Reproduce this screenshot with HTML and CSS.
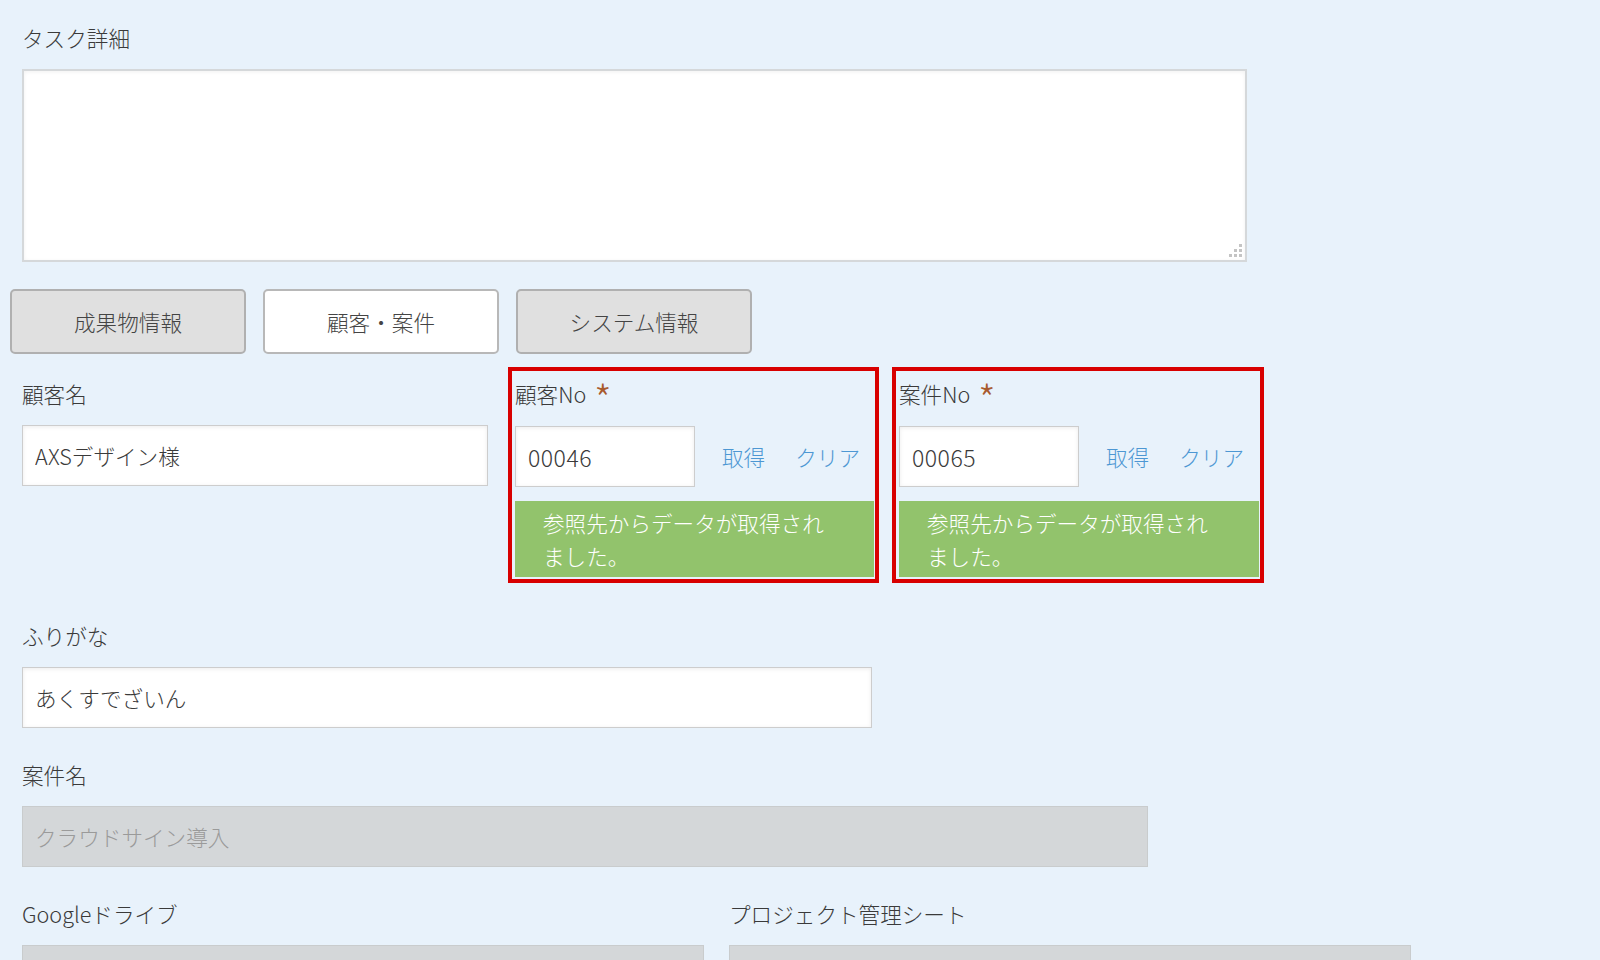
FILE: index.html
```html
<!DOCTYPE html>
<html lang="ja">
<head>
    <meta charset="UTF-8">
    <meta name="viewport" content="width=device-width, initial-scale=1.0">
    <title>タスク編集</title>
    <link rel="stylesheet" href="styles.css">
</head>
<body>
    <div class="form">
        <div class="field detail">
            <label class="field-label">タスク詳細</label>
            <div class="textarea-wrap">
                <textarea class="textarea"></textarea>
                <svg class="grip" width="16" height="14" viewBox="0 0 16 14">
                    <rect x="12" y="0" width="3" height="3"/>
                    <rect x="7" y="5" width="3" height="3"/>
                    <rect x="12" y="5" width="3" height="3"/>
                    <rect x="2" y="10" width="3" height="3"/>
                    <rect x="7" y="10" width="3" height="3"/>
                    <rect x="12" y="10" width="3" height="3"/>
                </svg>
            </div>
        </div>

        <div class="tabs">
            <button class="tab">成果物情報</button>
            <button class="tab active">顧客・案件</button>
            <button class="tab">システム情報</button>
        </div>

        <div class="ref-row">
            <div class="ref-col name-col">
                <label class="field-label">顧客名</label>
                <input class="input" type="text" value="AXSデザイン様">
            </div>

            <div class="ref-col ref-box">
                <label class="field-label">顧客No <span class="required">*</span></label>
                <div class="lookup">
                    <input class="input no-input" type="text" value="00046">
                    <a class="link" href="#">取得</a>
                    <a class="link" href="#">クリア</a>
                </div>
                <div class="notice">参照先からデータが取得されました。</div>
            </div>

            <div class="ref-col ref-box second">
                <label class="field-label">案件No <span class="required">*</span></label>
                <div class="lookup">
                    <input class="input no-input" type="text" value="00065">
                    <a class="link" href="#">取得</a>
                    <a class="link" href="#">クリア</a>
                </div>
                <div class="notice">参照先からデータが取得されました。</div>
            </div>
        </div>

        <div class="field">
            <label class="field-label">ふりがな</label>
            <input class="input w-furigana" type="text" value="あくすでざいん">
        </div>

        <div class="field">
            <label class="field-label">案件名</label>
            <input class="input locked w-project" type="text" value="クラウドサイン導入" disabled>
        </div>

        <div class="split">
            <div class="field half">
                <label class="field-label">Googleドライブ</label>
                <input class="input locked" type="text" disabled>
            </div>
            <div class="field half">
                <label class="field-label">プロジェクト管理シート</label>
                <input class="input locked" type="text" disabled>
            </div>
        </div>
    </div>
</body>
</html>
```

FILE: styles.css
```css
:root {
    --bg-color: #e8f2fb;
    --text-color: #3a3a3a;
    --border-color: #cdcdcd;
    --link-color: #4d97d3;
    --locked-bg: #d4d7d9;
    --notice-bg: #92c36c;
    --mark-red: #d80000;
}

* {
    margin: 0;
    padding: 0;
    box-sizing: border-box;
}

body {
    font-family: "Noto Sans CJK JP", "Noto Sans", sans-serif;
    font-size: 21.6px;
    font-weight: 300;
    background-color: var(--bg-color);
    color: var(--text-color);
    min-height: 100vh;
}

.form {
    padding: 22px 22px 0;
}

.field {
    margin-bottom: 31px;
}

.field-label {
    display: block;
    height: 31px;
    line-height: 31px;
    margin-bottom: 16px;
}

.input {
    display: block;
    width: 100%;
    height: 61px;
    padding: 0 12px;
    border: 1px solid var(--border-color);
    box-shadow: inset 0 1px 4px rgb(0 0 0 / 0.08);
    background-color: #fff;
    font-family: inherit;
    font-size: 21.6px;
    font-weight: 300;
    color: var(--text-color);
    outline: none;
}

.input.locked {
    background-color: var(--locked-bg);
    color: #9a9a9a;
    border-color: #c9cccd;
    box-shadow: none;
}

.no-input {
    width: 180px;
    flex-shrink: 0;
    font-size: 23px;
    letter-spacing: 0.5px;
}

.field.detail {
    margin-bottom: 27px;
}

.textarea-wrap {
    position: relative;
    width: 1225px;
}

.textarea {
    display: block;
    width: 100%;
    height: 193px;
    border: 2px solid #d5d8da;
    box-shadow: inset 0 1px 4px rgb(0 0 0 / 0.06);
    background-color: #fff;
    resize: none;
    font-family: inherit;
    font-size: 21.6px;
    outline: none;
}

.grip {
    position: absolute;
    right: 4px;
    bottom: 4px;
    fill: #c4c4c4;
}

.tabs {
    display: flex;
    gap: 17px;
    margin-left: -12px;
}

.tab {
    width: 236px;
    height: 65px;
    border: 2px solid #b0b0b0;
    border-radius: 5px;
    background-color: #e0e0e0;
    font-family: inherit;
    font-size: 21.6px;
    font-weight: 300;
    color: #444;
    cursor: pointer;
}

.tab.active {
    background-color: #fff;
    border-color: #b8b8b8;
}

.ref-row {
    display: flex;
    align-items: flex-start;
    margin-top: 13px;
    margin-bottom: 37px;
}

.name-col {
    width: 466px;
    padding-top: 11px;
}

.ref-box {
    width: 371px;
    margin-left: 20px;
    border: 4px solid var(--mark-red);
    padding: 7px 1px 2px 3px;
}

.ref-box.second {
    margin-left: 13px;
    width: 372px;
}

.ref-box .field-label {
    margin-bottom: 17px;
}

.required {
    display: inline-block;
    color: #a85a2e;
    font-size: 40px;
    line-height: 40px;
    height: 31px;
    vertical-align: top;
    margin-left: 3px;
}

.lookup {
    display: flex;
    align-items: center;
}

.link {
    color: var(--link-color);
    text-decoration: none;
    margin-left: 27px;
}

.link + .link {
    margin-left: 30px;
}

.notice {
    margin-top: 14px;
    padding: 6px 40px 5px 28px;
    background-color: var(--notice-bg);
    color: #fff;
    line-height: 32.6px;
}

.w-furigana {
    width: 850px;
}

.w-project {
    width: 1126px;
}

.split {
    display: flex;
    gap: 25px;
}

.half {
    width: 682px;
}
```
